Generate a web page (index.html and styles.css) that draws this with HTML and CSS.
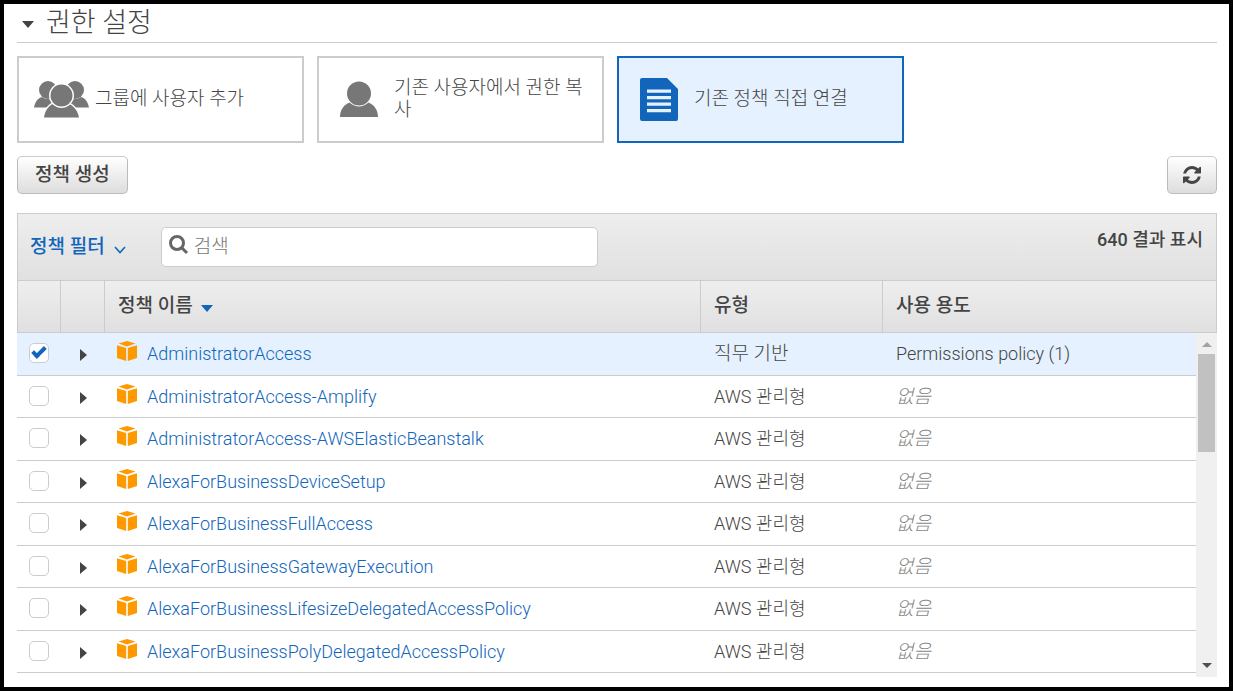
FILE: index.html
```html
<!DOCTYPE html>
<html lang="ko">
<head>
<meta charset="utf-8">
<meta name="viewport" content="width=device-width, initial-scale=1">
<title>권한 설정</title>
<link rel="stylesheet" href="styles.css">
</head>
<body>
<svg class="defs" aria-hidden="true">
  <symbol id="cube" viewBox="0 0 20 20">
    <path d="M10 0 18.500 2.600 10 5.400 1.500 2.600z"/>
    <path d="M0 4.200 9.200 7.100V20L0 17z"/>
    <path d="M20 4.200 10.800 7.100V20L20 17z"/>
  </symbol>
  <symbol id="caret-right" viewBox="0 0 7 12"><path d="M0 0 7 6 0 12z"/></symbol>
  <symbol id="caret-down" viewBox="0 0 12 7"><path d="M0 0H12L6 7z"/></symbol>
</svg>
<main class="page">
  <h1 class="section-title">
    <svg class="title-caret"><use href="#caret-down"/></svg>권한 설정
  </h1>

  <div class="tiles">
    <button type="button" class="tile tile-group" aria-pressed="false">
      <svg class="group-icon" viewBox="0 0 56 38">
        <circle cx="14" cy="9" r="9"/><circle cx="41" cy="9" r="9"/>
        <path d="M0 26.500C1 21 4 17 8 16c5 3 10 3 14 0v10.500zM55 26.500c-1-5.500-4-9.500-8-10.500-5 3-10 3-14 0v10.500z"/>
        <g class="front">
          <path d="M10 36.500C11 30 14 25.500 18.500 23c5 4 12 4 17 0C40 25.500 44 30 45 36.500z"/>
          <circle cx="27.500" cy="14.500" r="11"/>
        </g>
      </svg>
      <span>그룹에 사용자 추가</span>
    </button>
    <button type="button" class="tile" aria-pressed="false">
      <svg class="tile-icon" viewBox="0 0 38 44">
        <circle cx="19" cy="15.500" r="12"/>
        <path d="M0 39C0 32 4 26.500 9.500 24.500q9.500 8 19 0C34 26.500 38 32 38 39z"/>
      </svg>
      <span>기존 사용자에서 권한 복사</span>
    </button>
    <button type="button" class="tile selected" aria-pressed="true">
      <svg class="tile-icon" viewBox="0 0 38 44">
        <path fill-rule="evenodd" d="M2 0H27L38 11V41q0 2-2 2H2q-2 0-2-2V2q0-2 2-2zM7 11.500v3.200h24v-3.200zM7 18v3.200h24V18zM7 24.500v3.200h24v-3.200zM7 31v3.200h24V31z"/>
      </svg>
      <span>기존 정책 직접 연결</span>
    </button>
  </div>

  <div class="actions">
    <button type="button" class="btn">정책 생성</button>
    <button type="button" class="btn btn-refresh" aria-label="새로 고침">
      <svg viewBox="0 0 1536 1536"><path d="M1511 928q0 5-1 7-64 268-268 434.500T764 1536q-146 0-282.500-55T238 1324l-129 129q-19 19-45 19t-45-19-19-45V960q0-26 19-45t45-19h448q26 0 45 19t19 45-19 45l-137 137q71 66 161 102t187 36q134 0 250-65t186-179q11-17 53-117 8-23 30-23h192q13 0 22.500 9.500t9.500 22.500zm25-800v448q0 26-19 45t-45 19h-448q-26 0-45-19t-19-45 19-45l138-138Q969 256 768 256q-134 0-250 65T332 500q-11 17-53 117-8 23-30 23H50q-13 0-22.500-9.500T18 608v-7q65-268 270-434.500T768 0q146 0 284 55.500T1297 212l130-129q19-19 45-19t45 19 19 45z"/></svg>
    </button>
  </div>

  <section class="panel">
    <div class="toolbar">
      <button type="button" class="filter">정책 필터
        <svg viewBox="0 0 12 8"><path d="M1 1 6 6.500 11 1"/></svg>
      </button>
      <label class="search">
        <svg viewBox="0 0 20 20"><circle cx="8" cy="8" r="6.500"/><path d="M12.500 12.500 18 18"/></svg>
        <input type="text" placeholder="검색" aria-label="검색">
      </label>
      <strong class="count">640 결과 표시</strong>
    </div>
    <div class="table-wrap">
      <table class="policies">
        <colgroup><col class="c-check"><col class="c-expand"><col><col class="c-type"><col class="c-use"></colgroup>
        <thead>
          <tr><th></th><th></th><th>정책 이름 <svg class="sort"><use href="#caret-down"/></svg></th><th>유형</th><th>사용 용도</th></tr>
        </thead>
        <tbody>
          <tr class="checked">
            <td><input type="checkbox" checked aria-label="AdministratorAccess"></td>
            <td><button type="button" class="expand" aria-label="펼치기"><svg><use href="#caret-right"/></svg></button></td>
            <td><div class="name"><svg><use href="#cube"/></svg><a href="#">AdministratorAccess</a></div></td>
            <td class="job">직무 기반</td><td>Permissions policy (1)</td>
          </tr>
          <tr>
            <td><input type="checkbox" aria-label="AdministratorAccess-Amplify"></td>
            <td><button type="button" class="expand" aria-label="펼치기"><svg><use href="#caret-right"/></svg></button></td>
            <td><div class="name"><svg><use href="#cube"/></svg><a href="#">AdministratorAccess-Amplify</a></div></td>
            <td>AWS 관리형</td><td><em>없음</em></td>
          </tr>
          <tr>
            <td><input type="checkbox" aria-label="AdministratorAccess-AWSElasticBeanstalk"></td>
            <td><button type="button" class="expand" aria-label="펼치기"><svg><use href="#caret-right"/></svg></button></td>
            <td><div class="name"><svg><use href="#cube"/></svg><a href="#">AdministratorAccess-AWSElasticBeanstalk</a></div></td>
            <td>AWS 관리형</td><td><em>없음</em></td>
          </tr>
          <tr>
            <td><input type="checkbox" aria-label="AlexaForBusinessDeviceSetup"></td>
            <td><button type="button" class="expand" aria-label="펼치기"><svg><use href="#caret-right"/></svg></button></td>
            <td><div class="name"><svg><use href="#cube"/></svg><a href="#">AlexaForBusinessDeviceSetup</a></div></td>
            <td>AWS 관리형</td><td><em>없음</em></td>
          </tr>
          <tr>
            <td><input type="checkbox" aria-label="AlexaForBusinessFullAccess"></td>
            <td><button type="button" class="expand" aria-label="펼치기"><svg><use href="#caret-right"/></svg></button></td>
            <td><div class="name"><svg><use href="#cube"/></svg><a href="#">AlexaForBusinessFullAccess</a></div></td>
            <td>AWS 관리형</td><td><em>없음</em></td>
          </tr>
          <tr>
            <td><input type="checkbox" aria-label="AlexaForBusinessGatewayExecution"></td>
            <td><button type="button" class="expand" aria-label="펼치기"><svg><use href="#caret-right"/></svg></button></td>
            <td><div class="name"><svg><use href="#cube"/></svg><a href="#">AlexaForBusinessGatewayExecution</a></div></td>
            <td>AWS 관리형</td><td><em>없음</em></td>
          </tr>
          <tr>
            <td><input type="checkbox" aria-label="AlexaForBusinessLifesizeDelegatedAccessPolicy"></td>
            <td><button type="button" class="expand" aria-label="펼치기"><svg><use href="#caret-right"/></svg></button></td>
            <td><div class="name"><svg><use href="#cube"/></svg><a href="#">AlexaForBusinessLifesizeDelegatedAccessPolicy</a></div></td>
            <td>AWS 관리형</td><td><em>없음</em></td>
          </tr>
          <tr>
            <td><input type="checkbox" aria-label="AlexaForBusinessPolyDelegatedAccessPolicy"></td>
            <td><button type="button" class="expand" aria-label="펼치기"><svg><use href="#caret-right"/></svg></button></td>
            <td><div class="name"><svg><use href="#cube"/></svg><a href="#">AlexaForBusinessPolyDelegatedAccessPolicy</a></div></td>
            <td>AWS 관리형</td><td><em>없음</em></td>
          </tr>
        </tbody>
      </table>
      <div class="scrollbar" aria-hidden="true">
        <svg class="arrow-up" viewBox="0 0 10 5"><path d="M0 5 5 0 10 5z"/></svg>
        <div class="thumb"></div>
        <svg class="arrow-down" viewBox="0 0 10 5"><path d="M0 0H10L5 5z"/></svg>
      </div>
    </div>
  </section>
</main>
</body>
</html>
```
FILE: styles.css
```css
*, *::before, *::after { box-sizing: border-box; }
body {
  margin: 0;
  background: #fff;
  color: #444;
  font: 300 18px/22px Roboto, "Noto Sans CJK KR", sans-serif;
}
button, input { font: inherit; color: inherit; }
button { cursor: pointer; }
svg { flex: none; fill: currentColor; }
.defs { position: absolute; width: 0; height: 0; }

.page {
  min-height: 100vh;
  padding: 0 12px 10px 13px;
  border: 4px solid #000;
}
.section-title {
  display: flex;
  align-items: center;
  gap: 12px;
  height: 39px;
  margin: 0 0 13px;
  padding: 0 0 1px 5px;
  border-bottom: 1px solid #ccc;
  font-size: 27px;
  font-weight: 300;
  line-height: 34px;
}
.title-caret { width: 12px; height: 7px; margin-top: 3px; }

.tiles {
  display: grid;
  grid-template-columns: repeat(4, minmax(0, 287px));
  gap: 13px;
}
.tile {
  display: flex;
  align-items: center;
  gap: 16px;
  height: 87px;
  padding: 0 15px 2px 21px;
  border: 2px solid #ccc;
  background: #fff;
  font-size: 19px;
  text-align: left;
  word-break: break-all;
}
.tile svg { margin-top: 2px; color: #777; }
.tile-group { gap: 5px; padding-left: 15px; }
.group-icon { width: 56px; height: 38px; }
.group-icon .front { stroke: #fff; stroke-width: 3px; paint-order: stroke; }
.tile-icon { width: 38px; height: 44px; }
.tile.selected { border-color: #1166bb; background: #e5f1fe; }
.tile.selected svg { color: #1166bb; }

.actions {
  display: flex;
  justify-content: space-between;
  margin: 13px 0 19px;
}
.btn {
  height: 38px;
  padding: 0 17px 1px;
  border: 1px solid #bbb;
  border-top-color: #ccc;
  border-radius: 5px;
  background: linear-gradient(#fff, #ddd);
  font-size: 19px;
  font-weight: 500;
}
.btn-refresh { width: 50px; padding: 0 15px; }
.btn-refresh svg { display: block; width: 18px; height: 18px; }

.toolbar {
  display: flex;
  align-items: center;
  height: 67px;
  padding: 0 13px 0 12px;
  border: 1px solid #ccc;
  border-bottom: 0;
  background: linear-gradient(#eee, #e0e0e0);
  font-size: 19px;
}
.filter {
  display: flex;
  align-items: center;
  gap: 9px;
  padding: 0 0 1px;
  border: 0;
  background: none;
  color: #1166bb;
  font-weight: 500;
}
.filter svg { width: 12px; height: 8px; margin-top: 6px; fill: none; stroke: currentColor; stroke-width: 1.600px; }
.search {
  display: flex;
  align-items: center;
  width: 437px;
  height: 40px;
  margin-left: 35px;
  padding: 0 7px;
  border: 1px solid #ccc;
  border-radius: 5px;
  background: #fff;
}
.search svg { width: 20px; height: 20px; margin-bottom: 4px; fill: none; stroke: #666; stroke-width: 3px; }
.search input {
  flex: 1;
  min-width: 0;
  height: 32px;
  padding: 0 5px 2px;
  border: 0;
  outline: 0;
  background: none;
}
.search input::placeholder { color: #777; opacity: 1; }
.count { margin-left: auto; padding-bottom: 14px; font-size: 18px; font-weight: 500; }

.table-wrap { position: relative; padding-bottom: 4px; }
.policies { width: 100%; border-collapse: separate; border-spacing: 0; table-layout: fixed; }
.c-check { width: 43px; }
.c-expand { width: 44px; }
.c-type { width: 182px; }
.c-use { width: 335px; }
.policies th {
  height: 53px;
  padding: 0 13px 2px;
  border: 1px solid #ccc;
  border-right: 0;
  background: linear-gradient(#eee, #e0e0e0);
  font-size: 19px;
  font-weight: 500;
  text-align: left;
}
.policies th:last-child { border-right: 1px solid #ccc; }
.sort { width: 12px; height: 7px; margin-left: 4px; color: #1166bb; }
.policies td { height: 42px; padding: 0 14px; border-bottom: 1px solid #ccc; }
.policies tr:nth-child(odd) td { height: 43px; }
.policies td:nth-child(1) { padding: 0 0 0 12px; }
.policies td:nth-child(2) { padding: 0; }
.policies td:nth-child(3) { padding: 0 13px; }
.policies .job, .policies em { font-size: 19px; }
.checked td { background: #e5f1fe; }
input[type="checkbox"] {
  display: block;
  appearance: none;
  width: 20px;
  height: 20px;
  margin: 0 0 2px;
  border: 1px solid #ccc;
  border-radius: 5px;
  background: #fff;
}
input[type="checkbox"]:checked::after {
  content: "";
  display: block;
  width: 14px;
  height: 8px;
  margin: 3px 2px;
  border: solid #1166bb;
  border-width: 0 0 4px 4px;
  transform: rotate(-45deg);
}
.expand { display: block; padding: 2px 20px 0; border: 0; background: none; }
.expand svg { display: block; width: 7px; height: 12px; }
.name { display: flex; align-items: center; gap: 10px; }
.name svg { width: 20px; height: 20px; margin-bottom: 6px; color: #ff9900; }
.name a { color: #1166bb; text-decoration: none; }
.policies em { color: #888; }

.scrollbar {
  position: absolute;
  top: 53px;
  right: 0;
  bottom: 0;
  display: flex;
  flex-direction: column;
  align-items: center;
  width: 21px;
  padding: 9px 2px;
  background: #f0f0f0;
}
.scrollbar svg { width: 10px; height: 5px; }
.thumb { width: 17px; height: 98px; margin-top: 7px; background: #c1c1c1; }
.arrow-up { color: #a3a3a3; }
.arrow-down { margin-top: auto; color: #505050; }
```
